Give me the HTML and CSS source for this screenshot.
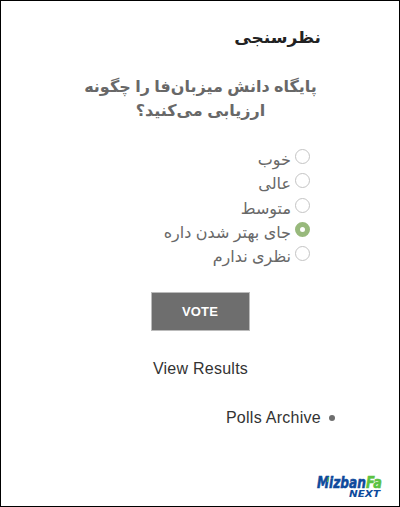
FILE: index.html
```html
<!DOCTYPE html>
<html lang="fa" dir="rtl">
<head>
    <meta charset="UTF-8">
    <title>نظرسنجی</title>
    <link rel="stylesheet" href="styles.css">
</head>
<body>
    <div class="widget">
        <h3 class="widget-title">نظرسنجی</h3>
        <form class="poll">
            <p class="question">پایگاه دانش میزبان‌فا را چگونه ارزیابی می‌کنید؟</p>
            <ul class="answers">
                <li><label><input type="radio" name="poll"> خوب</label></li>
                <li><label><input type="radio" name="poll"> عالی</label></li>
                <li><label><input type="radio" name="poll"> متوسط</label></li>
                <li><label><input type="radio" name="poll" checked> جای بهتر شدن داره</label></li>
                <li><label><input type="radio" name="poll"> نظری ندارم</label></li>
            </ul>
            <button type="button" class="vote">VOTE</button>
            <a class="results">View Results</a>
        </form>
        <ul class="archive">
            <li><a>Polls Archive</a></li>
        </ul>
    </div>
    <svg class="logo" width="68" height="30" viewBox="0 -4 68 30">
        <g transform="scale(1 1.5)">
            <text x="1" y="9" textLength="49" lengthAdjust="spacingAndGlyphs" class="blue">Mizban</text>
            <text x="50" y="9" textLength="16" lengthAdjust="spacingAndGlyphs" class="green">Fa</text>
        </g>
        <path class="accent" d="M12.5 3l-1 5"/>
        <text x="33" y="23" textLength="31" lengthAdjust="spacingAndGlyphs" class="next">NEXT</text>
    </svg>
</body>
</html>
```

FILE: styles.css
```css
* {
    box-sizing: border-box;
}
body {
    margin: 0;
    height: 507px;
    border: 1px solid #000;
    background-color: #fff;
    color: #686868;
    font-family: "Liberation Sans", "DejaVu Sans", sans-serif;
    font-size: 16px;
    line-height: 24px;
}
.widget {
    width: 242px;
    margin-right: 78px;
    padding-top: 27px;
}
.widget-title {
    margin: 0;
    color: #222;
    font-size: 16px;
    line-height: 20px;
    transform: scaleX(1.065);
    transform-origin: right;
}
.question {
    margin: 27px 0 24px 1px;
    font-weight: bold;
    text-align: center;
}
ul {
    list-style: none;
    margin: 0;
    padding: 0;
}
.answers {
    padding-right: 11px;
}
.answers li {
    height: 24.3px;
}
.answers label {
    display: flex;
    align-items: flex-start;
    gap: 4px;
    line-height: 25px;
}
.answers input {
    appearance: none;
    width: 15px;
    height: 15px;
    margin: 2px 0 0;
    border: 1px solid #c4c4c4;
    border-radius: 50%;
    background-color: #fff;
}
.answers input:checked {
    border: 5px solid #98b97c;
}
.vote {
    display: block;
    width: 99px;
    height: 39px;
    margin: 24px auto 0;
    border: 1px solid #bbb;
    background-color: #6e6e6e;
    color: #fff;
    font: bold 13px "Liberation Sans", sans-serif;
    letter-spacing: 0.2px;
}
.results {
    display: block;
    margin: 26px -1px 0 0;
    color: #333;
    letter-spacing: 0.25px;
    text-align: center;
}
.archive {
    margin: 25px -14px 0 0;
    color: #333;
    letter-spacing: 0.27px;
}
.archive li {
    display: flex;
    align-items: center;
    gap: 8px;
}
.archive li::before {
    content: "";
    width: 6px;
    height: 6px;
    border-radius: 50%;
    background-color: #6e6e6e;
}
.logo {
    position: absolute;
    left: 316px;
    top: 470px;
    direction: ltr;
    overflow: visible;
}
.logo text {
    font: italic bold 11px "DejaVu Sans", sans-serif;
}
.logo .blue {
    fill: #0e4a9c;
    stroke: #0e4a9c;
    stroke-width: 0.4px;
}
.logo .green {
    fill: #5cc242;
    stroke: #5cc242;
    stroke-width: 0.4px;
}
.logo .accent {
    stroke: #5cc242;
    stroke-width: 1px;
}
.logo .next {
    fill: #0e4a9c;
    font-size: 9.5px;
}
```
